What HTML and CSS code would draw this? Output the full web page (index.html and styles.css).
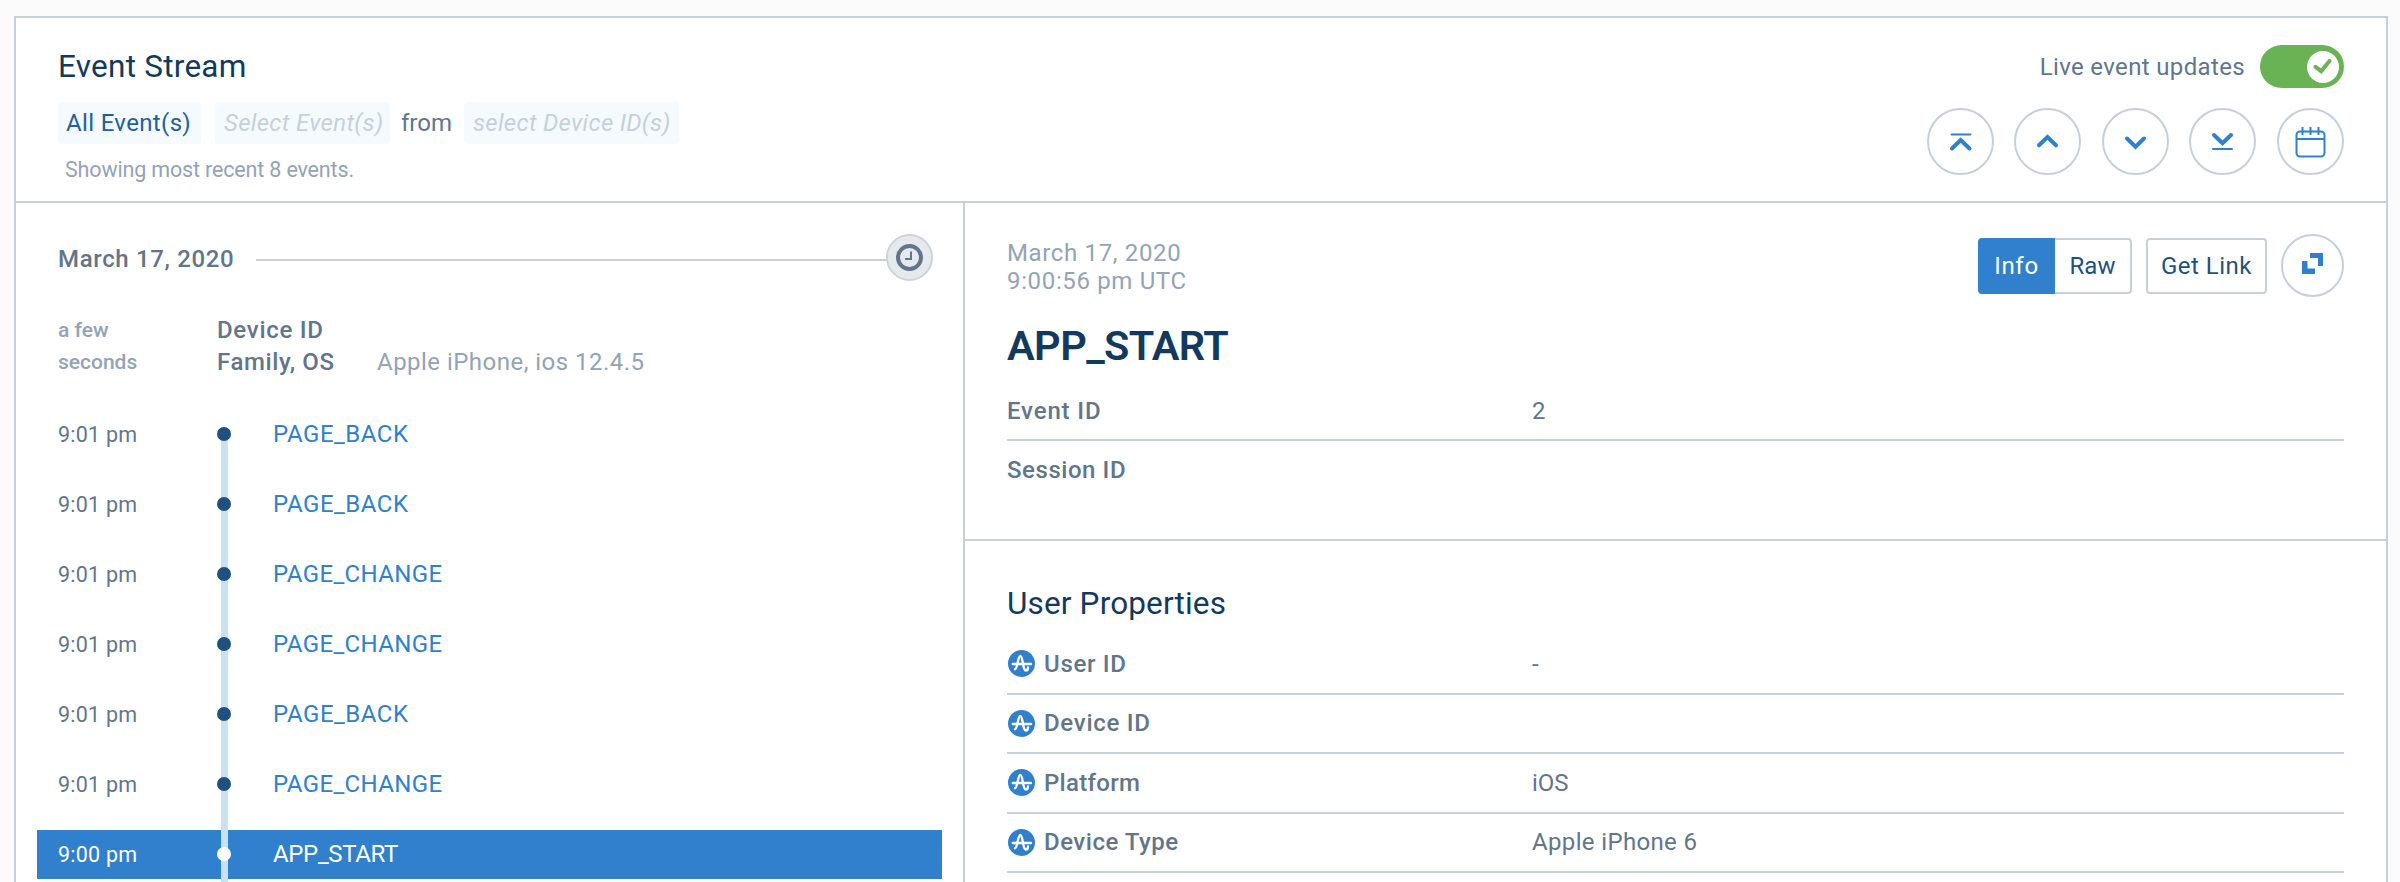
FILE: index.html
```html
<!DOCTYPE html>
<html lang="en">
<head>
<meta charset="utf-8">
<title>Event Stream</title>
<link rel="stylesheet" href="styles.css">
</head>
<body>
<svg width="0" height="0" class="defs">
  <symbol id="amp" viewBox="0 0 27 27">
    <circle cx="13.5" cy="13.5" r="13.5" fill="#3180cd"/>
    <path d="M4.800 14H23M7 19.200C9.500 19.200 9.800 6 12.300 6C15 6 14.600 20.500 17.800 20.500C19.500 20.500 20 19 20 17.500" fill="none" stroke="#fff" stroke-width="2.400" stroke-linecap="round"/>
  </symbol>
</svg>
<main class="card">
  <header class="head">
    <div class="head-left">
      <h1 class="title">Event Stream</h1>
      <div class="filters">
        <span class="chip chip-all"><span class="t-all">All Event(s)</span></span>
        <span class="chip chip-sel"><i class="t-sel">Select Event(s)</i></span>
        <span class="from">from</span>
        <span class="chip chip-dev"><i class="t-dev">select Device ID(s)</i></span>
      </div>
      <div class="showing">Showing most recent 8 events.</div>
    </div>
    <div class="head-right">
      <div class="live"><span class="t-live">Live event updates</span>
        <span class="toggle"><span class="knob"><svg width="20" height="16" viewBox="0 0 20 16"><path d="M2.500 7.800L8.200 12.200L16.500 2" fill="none" stroke="#69b355" stroke-width="4" stroke-linecap="round"/></svg></span></span>
      </div>
      <div class="circles">
        <button class="circle"><svg width="67" height="67" viewBox="0 0 67 67"><path d="M24.500 26.600H43.500" stroke-width="2"/><path d="M25 40.500L33.700 32L42.500 40.500" stroke-width="4"/></svg></button>
        <button class="circle"><svg width="67" height="67" viewBox="0 0 67 67"><path d="M25 37.300L33.500 29L42 37.300" stroke-width="4"/></svg></button>
        <button class="circle"><svg width="67" height="67" viewBox="0 0 67 67"><path d="M25 30.500L33.500 38.700L42 30.500" stroke-width="4"/></svg></button>
        <button class="circle"><svg width="67" height="67" viewBox="0 0 67 67"><path d="M25 27L33.500 35.300L42 27" stroke-width="4"/><path d="M24 41H43" stroke-width="2"/></svg></button>
        <button class="circle"><svg width="67" height="67" viewBox="0 0 67 67"><rect x="19.500" y="23.500" width="28" height="25" rx="3.500" stroke-width="2"/><path d="M19.500 31H47.500M25.500 19V27M33.500 19V27M41.500 19V27" stroke-width="2" stroke-linecap="butt"/></svg></button>
      </div>
    </div>
  </header>
  <div class="body">
    <section class="stream">
      <div class="day"><span class="t-day">March 17, 2020</span><span class="rule"></span><span class="clock"><svg width="27" height="27" viewBox="0 0 27 27"><circle cx="13.500" cy="13.500" r="11.500" fill="none" stroke="#62758b" stroke-width="4"/><path d="M15 7.500V15H9" fill="none" stroke="#62758b" stroke-width="2"/></svg></span></div>
      <div class="device">
        <div class="ago"><div class="t-ago1">a few</div><div class="t-ago2">seconds</div></div>
        <div class="dev-info">
          <div class="b t-did">Device ID</div>
          <div class="dev-line"><span class="b t-fam">Family, OS</span><span class="t-apple">Apple iPhone, ios 12.4.5</span></div>
        </div>
      </div>
      <div class="events">
        <div class="event"><span class="time">9:01 pm</span><span class="rail"><span class="dot"></span></span><span class="name">PAGE_BACK</span></div>
        <div class="event"><span class="time">9:01 pm</span><span class="rail"><span class="dot"></span></span><span class="name">PAGE_BACK</span></div>
        <div class="event"><span class="time">9:01 pm</span><span class="rail"><span class="dot"></span></span><span class="name change">PAGE_CHANGE</span></div>
        <div class="event"><span class="time">9:01 pm</span><span class="rail"><span class="dot"></span></span><span class="name change">PAGE_CHANGE</span></div>
        <div class="event"><span class="time">9:01 pm</span><span class="rail"><span class="dot"></span></span><span class="name">PAGE_BACK</span></div>
        <div class="event"><span class="time">9:01 pm</span><span class="rail"><span class="dot"></span></span><span class="name change">PAGE_CHANGE</span></div>
        <div class="event active"><span class="time">9:00 pm</span><span class="rail"><span class="dot"></span></span><span class="name start">APP_START</span></div>
      </div>
    </section>
    <section class="detail">
      <div class="summary">
        <div class="top">
          <div class="stamp"><div class="t-d1">March 17, 2020</div><div class="t-d2">9:00:56 pm UTC</div></div>
          <div class="actions">
            <div class="seg"><button class="btn on"><span class="t-info">Info</span></button><button class="btn raw"><span class="t-raw">Raw</span></button></div>
            <button class="btn link"><span class="t-link">Get Link</span></button>
            <button class="circle expand"><svg width="21" height="21" viewBox="0 0 21 21"><path d="M8 0H21V13H16V5H8ZM0 8H5.500V15.500H13V21H0Z" fill="#3180cd" stroke="none"/></svg></button>
          </div>
        </div>
        <h2 class="event-title">APP_START</h2>
        <div class="prop p-event"><span class="b t-eid">Event ID</span><span class="val">2</span></div>
        <div class="prop p-session"><span class="b t-sid">Session ID</span></div>
      </div>
      <div class="user">
        <h3 class="user-title">User Properties</h3>
        <div class="prop up"><span class="key"><svg class="amp"><use href="#amp"/></svg><span class="b t-uid">User ID</span></span><span class="val">-</span></div>
        <div class="prop up"><span class="key"><svg class="amp"><use href="#amp"/></svg><span class="b t-did">Device ID</span></span></div>
        <div class="prop up"><span class="key"><svg class="amp"><use href="#amp"/></svg><span class="b t-plat">Platform</span></span><span class="val t-ios">iOS</span></div>
        <div class="prop up"><span class="key"><svg class="amp"><use href="#amp"/></svg><span class="b t-type">Device Type</span></span><span class="val t-ip6">Apple iPhone 6</span></div>
      </div>
    </section>
  </div>
</main>
</body>
</html>
```

FILE: styles.css
```css
* { box-sizing: border-box; }
html, body { margin: 0; height: 882px; overflow: hidden; }
body { background: #fbfbfb; padding: 16px 12px 0 14px; font-family: Roboto, "Liberation Sans", sans-serif; font-size: 24px; line-height: 28px; color: #62758b; white-space: nowrap; }
h1, h2, h3 { margin: 0; font-weight: 400; color: #13395e; }
button { font: inherit; padding: 0; margin: 0; background: #fff; }
.defs { position: absolute; }
.card { height: 900px; background: #fff; border: 2px solid #c6d0da; display: flex; flex-direction: column; }
.b { font-weight: 500; }

.head { height: 185px; flex: none; border-bottom: 2px solid #c6d0da; padding: 0 42px; display: flex; justify-content: space-between; }
.title { margin-top: 31px; font-size: 31.500px; line-height: 36px; letter-spacing: .25px; }
.filters { margin-top: 17px; display: flex; align-items: center; height: 42px; }
.chip { height: 42px; border-radius: 4px; background: #f5faff; display: flex; align-items: center; padding-left: 9px; }
.chip i { color: #c6d0da; }
.chip-all { width: 143px; color: #1f61a0; padding-left: 8px; }
.t-all { letter-spacing: .35px; }
.t-sel { letter-spacing: .3px; }
.t-dev { letter-spacing: .27px; }
.chip-sel { width: 175px; margin-left: 14px; }
.from { width: 74px; padding-left: 11px; }
.chip-dev { width: 215px; }
.showing { margin: 14px 0 0 7px; font-size: 21.500px; color: #94a3b5; line-height: 24px; letter-spacing: -.16px; }

.head-right { display: flex; flex-direction: column; align-items: flex-end; padding-top: 27px; }
.live { display: flex; align-items: center; height: 43px; gap: 15px; }
.t-live { letter-spacing: .35px; }
.toggle { width: 84px; height: 43px; border-radius: 22px; background: #69b355; display: flex; align-items: center; justify-content: flex-end; padding-right: 5px; }
.knob { width: 32px; height: 32px; border-radius: 50%; background: #fff; display: flex; align-items: center; justify-content: center; }
.circles { display: flex; margin-top: 20px; gap: 20.600px; }
.circle { width: 67px; height: 67px; border: 2px solid #c6d0da; border-radius: 50%; display: flex; align-items: center; justify-content: center; }
.circle svg { flex: none; fill: none; stroke: #3180cd; stroke-linecap: round; }

.body { flex: 1; display: flex; }
.stream { width: 947px; flex: none; padding-left: 21px; }
.day { display: flex; align-items: center; height: 47px; margin-top: 31px; padding-left: 21px; }
.t-day { width: 198px; font-weight: 500; letter-spacing: .65px; padding-top: 3px; }
.rule { width: 630px; height: 2px; background: #c6d0da; margin-top: 5px; }
.clock { width: 47px; height: 47px; border-radius: 50%; border: 2px solid #cdd3da; background: #e6eaef; display: flex; align-items: center; justify-content: center; }
.device { display: flex; margin-top: 34px; padding-left: 21px; height: 84px; }
.ago { width: 159px; font-size: 21px; font-weight: 500; color: #94a3b5; line-height: 31.500px; }
.dev-info { line-height: 31.500px; }
.dev-line { display: flex; }
.t-did { letter-spacing: .7px; }
.t-fam { width: 160px; letter-spacing: .6px; }
.t-apple { color: #94a3b5; letter-spacing: .47px; }
.event { width: 905px; height: 70px; display: flex; align-items: center; padding-left: 21px; }
.time { width: 155px; font-size: 21.500px; padding-top: 2px; letter-spacing: .25px; }
.rail { width: 22px; align-self: stretch; display: flex; align-items: center; justify-content: center; background: linear-gradient(#c9e1f1, #c9e1f1) 8px 0 / 7px 100% no-repeat; }
.event:first-child .rail { background-position: 8px 35px; }
.dot { width: 14px; height: 14px; border-radius: 50%; background: #1f5180; }
.name { padding-left: 38px; color: #3180cd; letter-spacing: .5px; }
.change { letter-spacing: .35px; }
.start { letter-spacing: -.35px; }
.active { background: linear-gradient(#3180cd, #3180cd) 0 11px / 100% 49px no-repeat; color: #fff; }
.active .name { color: #fff; }
.active .dot { background: #fff; }

.detail { flex: 1; border-left: 2px solid #c6d0da; }
.summary { height: 338px; padding: 31px 42px 0; border-bottom: 2px solid #c6d0da; }
.top { display: flex; justify-content: space-between; height: 63px; }
.stamp { color: #94a3b5; padding-top: 5px; letter-spacing: .65px; }
.actions { display: flex; align-items: center; }
.seg { display: flex; margin-right: 14px; }
.btn { height: 56px; border: 2px solid #c6d0da; border-radius: 4px; color: #1f5180; display: flex; align-items: center; justify-content: center; }
.on { width: 77px; background: #3180cd; border-color: #3180cd; color: #fff; border-radius: 4px 0 0 4px; letter-spacing: .7px; }
.raw { width: 77px; border-left: 0; border-radius: 0 4px 4px 0; }
.link { width: 121px; letter-spacing: .5px; }
.expand { width: 63px; height: 63px; margin-left: 14px; padding-bottom: 4px; }
.event-title { font-size: 41.500px; line-height: 50px; font-weight: 600; margin-top: 24px; letter-spacing: -.6px; }
.prop { display: flex; align-items: center; border-bottom: 2px solid #c6d0da; }
.prop > :first-child { width: 525px; flex: none; }
.p-event { height: 59px; margin-top: 11px; }
.p-session { height: 58px; border: 0; }
.t-eid { letter-spacing: .85px; }
.t-sid { letter-spacing: .55px; }
.t-uid { letter-spacing: .7px; }
.t-plat { letter-spacing: .3px; }
.t-type { letter-spacing: .5px; }
.t-ip6 { letter-spacing: .35px; }
.user { padding: 43px 42px 0; }
.user-title { font-size: 31.500px; line-height: 40px; letter-spacing: .15px; }
.up { height: 59.500px; }
.user-title + .up { margin-top: 11px; }
.key { display: flex; align-items: center; }
.amp { width: 27px; height: 27px; margin: 0 9px 0 1px; }
```
